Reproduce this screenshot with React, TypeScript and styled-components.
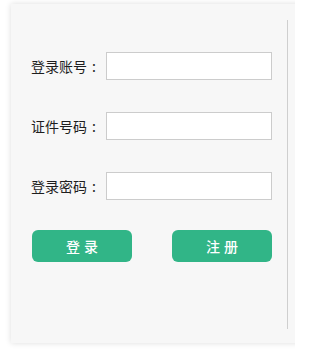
import React from 'react'
import styled, { createGlobalStyle } from 'styled-components'

const GlobalStyle = createGlobalStyle`
  html, body {
    margin: 0;
    padding: 0;
    background: #fff;
    overflow: hidden;
  }
  body {
    font-family: "Noto Sans CJK SC", "Noto Sans", sans-serif;
  }
`

const Page = styled.div`
  width: 295px;
  height: 355px;
  box-sizing: border-box;
  padding: 4px 0 0 11px;
  overflow: hidden;
`

const Panel = styled.div`
  width: 300px;
  height: 339px;
  box-sizing: border-box;
  padding: 16px 0 14px 0;
  background: #f7f7f7;
  box-shadow: 0 0 6px rgba(0, 0, 0, 0.14);
`

const Inner = styled.div`
  width: 277px;
  height: 100%;
  box-sizing: border-box;
  border-right: 1px solid #cfcfcf;
  padding: 32px 0 0 20px;
  display: flex;
  flex-direction: column;
  gap: 32px;
`

const Row = styled.div`
  display: flex;
  align-items: center;
  height: 28px;
`

const Label = styled.label`
  width: 75px;
  box-sizing: border-box;
  padding-right: 10px;
  text-align: right;
  font-size: 14px;
  color: #1e1e1e;
  white-space: nowrap;
`

const Colon = styled.span`
  margin-left: 5px;
`

const Input = styled.input`
  width: 166px;
  height: 28px;
  box-sizing: border-box;
  border: 1px solid #cccccc;
  background: #fff;
  outline: none;
  padding: 0 6px;
  font-size: 14px;
`

const Buttons = styled.div`
  display: flex;
  gap: 40px;
  padding-left: 1px;
  margin-top: -2px;
`

const Button = styled.button`
  width: 100px;
  height: 32px;
  border: none;
  border-radius: 6px;
  background: #31b587;
  color: #fff;
  font-family: "Noto Sans CJK SC", sans-serif;
  font-size: 14px;
  font-weight: 500;
  letter-spacing: 4px;
  text-indent: 4px;
  cursor: pointer;
`

const fields = ['登录账号', '证件号码', '登录密码']

export default function App() {
  return (
    <Page>
      <GlobalStyle />
      <Panel>
        <Inner>
          {fields.map((f) => (
            <Row key={f}>
              <Label>
                {f}
                <Colon>:</Colon>
              </Label>
              <Input type={f === '登录密码' ? 'password' : 'text'} />
            </Row>
          ))}
          <Buttons>
            <Button>登录</Button>
            <Button>注册</Button>
          </Buttons>
        </Inner>
      </Panel>
    </Page>
  )
}
